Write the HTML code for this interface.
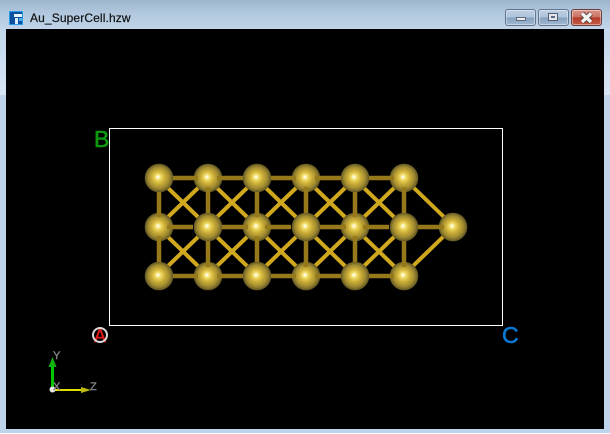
<!DOCTYPE html>
<html>
<head>
<meta charset="utf-8">
<style>
html,body{margin:0;padding:0;width:610px;height:434px;overflow:hidden;background:#fff}
#win{position:absolute;left:0;top:0;width:610px;height:434px;background:#bdd4ea}
#tb{position:absolute;left:0;top:0;width:610px;height:29px;background:linear-gradient(180deg,#9db5cd 0,#afc6dc 40%,#c0d5e9 100%)}
#ls,#rs{position:absolute;top:29px;width:6px;height:66px;background:linear-gradient(180deg,#c2d7ec,#d6e5f3)}
#ls{left:0}#rs{left:604px}
#view{position:absolute;left:6px;top:29px;width:598px;height:400px;background:#000}
#bot{position:absolute;left:0;top:433px;width:610px;height:1px;background:#fff}
#title{position:absolute;left:30px;top:10px;font:12px/16px "Liberation Sans",sans-serif;letter-spacing:.12px;color:#111;white-space:nowrap;-webkit-text-stroke:.2px #111}
.b{position:absolute;top:9px;width:29px;height:15px;border:1px solid #62758e;border-radius:3px;box-shadow:inset 0 0 0 1px rgba(255,255,255,.4);background:linear-gradient(180deg,#bccee2 0,#aec3da 48%,#86a0be 52%,#a0b9d4 100%)}
#close{background:linear-gradient(180deg,#d99588 0,#cc7566 45%,#b53b2a 52%,#c65c48 100%);border-color:#6e3f3f}
</style>
</head>
<body>
<div id="win">
  <div id="tb"></div>
  <div id="ls"></div><div id="rs"></div>
  <svg style="position:absolute;left:9px;top:11px" width="16" height="16" viewBox="0 0 16 16">
    <rect x="0" y="0" width="14" height="14" fill="#2a9ae8"/>
    <rect x="1" y="1" width="12" height="12" fill="#0b4f9e"/>
    <rect x="5" y="3" width="8" height="3" fill="#e8f4fc"/>
    <rect x="6" y="7" width="3" height="6" fill="#d8ecfa"/>
    <rect x="10" y="7" width="3" height="3" fill="#4fb0ee"/>
  </svg>
  <div id="title">Au_SuperCell.hzw</div>

  <div class="b" style="left:505px"></div>
  <div style="position:absolute;left:516px;top:17px;width:8px;height:2px;background:#ececec;border:1px solid #5a6a80"></div>
  <div class="b" style="left:538px"></div>
  <div style="position:absolute;left:549px;top:14px;width:4px;height:2px;border:2px solid #e6e6ea;outline:1px solid #4f5f78;background:#5c6c88"></div>
  <div class="b" id="close" style="left:571px"></div>
  <svg style="position:absolute;left:571px;top:9px" width="31" height="17" viewBox="0 0 31 17">
    <path d="M11 4.5 L20 13 M20 4.5 L11 13" stroke="#4a3a3a" stroke-width="5" fill="none"/>
    <path d="M11 4.5 L20 13 M20 4.5 L11 13" stroke="#f4f1f1" stroke-width="3.4" fill="none"/>
  </svg>

  <div id="view"></div>
  <div id="bot"></div>

  <svg style="position:absolute;left:0;top:0" width="610" height="434" viewBox="0 0 610 434">
    <defs>
      <radialGradient id="au" cx=".5" cy=".5" r=".5" fx=".46" fy=".46">
        <stop offset="0" stop-color="#ffffff"/>
        <stop offset=".08" stop-color="#fff8c8"/>
        <stop offset=".22" stop-color="#eed760"/>
        <stop offset=".45" stop-color="#cdb038"/>
        <stop offset=".75" stop-color="#a08a30"/>
        <stop offset="1" stop-color="#5e5424"/>
      </radialGradient>
      <circle id="atom" cx="159" cy="178" r="14.3" fill="url(#au)"/>
      <g id="x" stroke="#cfa81e" stroke-width="4" fill="none">
        <line x1="168" y1="188" x2="198" y2="217"/>
        <line x1="198" y1="188" x2="168" y2="217"/>
      </g>
      <g id="x3">
        <use href="#x"/><use href="#x" x="49"/><use href="#x" x="98"/><use href="#x" x="147"/><use href="#x" x="196"/>
      </g>
      <g id="rowa">
        <use href="#atom"/><use href="#atom" x="49"/><use href="#atom" x="98"/><use href="#atom" x="147"/><use href="#atom" x="196"/><use href="#atom" x="245"/>
      </g>
      <g id="ht" stroke="#96791a" stroke-width="4.5" fill="none">
        <line x1="173" y1="178" x2="198" y2="178"/>
        <line x1="217" y1="178" x2="243" y2="178"/>
        <line x1="271" y1="178" x2="296" y2="178"/>
        <line x1="315" y1="178" x2="341" y2="178"/>
        <line x1="369" y1="178" x2="394" y2="178"/>
      </g>
      <g id="hm" stroke="#96791a" stroke-width="4.5" fill="none">
        <line x1="167" y1="227" x2="193" y2="227"/>
        <line x1="222" y1="227" x2="248" y2="227"/>
      </g>
      <g id="v" stroke="#96791a" stroke-width="4.5" fill="none">
        <line x1="159" y1="192" x2="159" y2="217"/>
        <line x1="159" y1="236" x2="159" y2="262"/>
        <line x1="208" y1="187" x2="208" y2="213"/>
        <line x1="208" y1="241" x2="208" y2="267"/>
      </g>
    </defs>

    <rect x="109.5" y="128.5" width="393" height="197" fill="none" stroke="#fff" stroke-width="1"/>

    <use href="#x3"/><use href="#x3" y="49"/>
    <g stroke="#cfa81e" stroke-width="4" fill="none">
      <line x1="413" y1="187" x2="444" y2="217"/>
      <line x1="413" y1="266" x2="444" y2="236"/>
    </g>

    <use href="#rowa"/><use href="#rowa" y="49"/><use href="#rowa" y="98"/>
    <use href="#atom" x="294" y="49"/>

    <use href="#ht"/><use href="#ht" y="98"/>
    <use href="#hm"/><use href="#hm" x="98"/><use href="#hm" x="196"/>
    <use href="#v"/><use href="#v" x="98"/><use href="#v" x="196"/>

    <text x="94" y="147" font-family="Liberation Sans, sans-serif" font-size="23" fill="#0c9a0c" stroke="#0c9a0c" stroke-width=".6">B</text>
    <text x="502" y="343" font-family="Liberation Sans, sans-serif" font-size="23" fill="#0a78d2" stroke="#0a78d2" stroke-width=".6">C</text>

    <text x="94" y="342" font-family="Liberation Sans, sans-serif" font-size="18" fill="#d81818" stroke="#d81818" stroke-width=".5">A</text>
    <circle cx="100" cy="335" r="7" fill="none" stroke="#ddd6d6" stroke-width="2"/>

    <line x1="52.5" y1="389" x2="52.5" y2="366" stroke="#00c800" stroke-width="3"/>
    <path d="M52.5 357 L48.5 367 L56.5 367 Z" fill="#10b010"/>
    <line x1="54" y1="390" x2="82" y2="390" stroke="#e0e000" stroke-width="2"/>
    <path d="M91 390 L81 387 L81 393 Z" fill="#bcb810"/>
    <circle cx="52.5" cy="389.5" r="3" fill="#e8e8e8"/>
    <g font-family="Liberation Sans, sans-serif" font-size="11" fill="#808080" stroke="#808080" stroke-width=".4">
      <text x="53" y="359">Y</text>
      <text x="53" y="390">X</text>
      <text x="90" y="390">Z</text>
    </g>
  </svg>
</div>
</body>
</html>
